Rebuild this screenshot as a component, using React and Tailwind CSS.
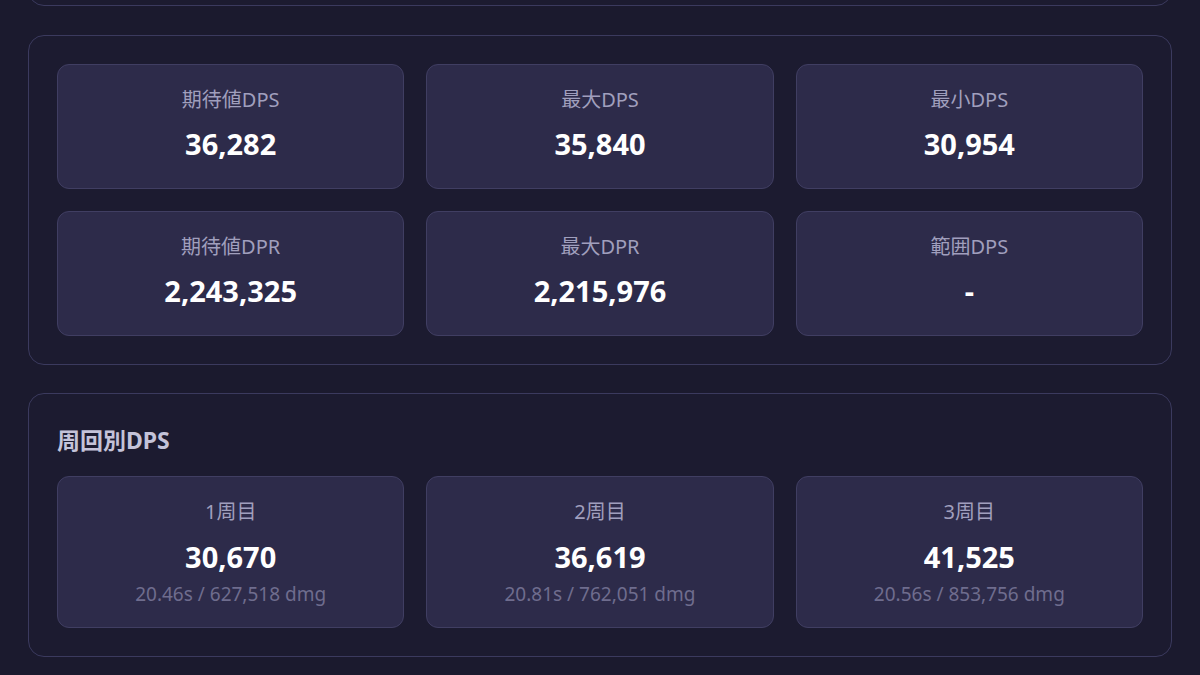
import React from "react";

const font = { fontFamily: '"Noto Sans", "Noto Sans CJK JP", sans-serif' };

function StatCard({ label, value }) {
  return (
    <div className="flex flex-col items-center rounded-xl border border-[#403e62] bg-[#2d2b4a] pt-[21px] pb-[23px]">
      <div className="text-[20px] leading-[28px] text-[#a09fbd]">{label}</div>
      <div className="mt-[9px] text-[29px] font-bold leading-[42px] text-white">{value}</div>
    </div>
  );
}

function RoundCard({ label, value, sub }) {
  return (
    <div className="flex flex-col items-center rounded-xl border border-[#403e62] bg-[#2d2b4a] pt-[21px] pb-[21px]">
      <div className="text-[20px] leading-[28px] text-[#a09fbd]">{label}</div>
      <div className="mt-[10px] text-[29px] font-bold leading-[42px] text-white">{value}</div>
      <div className="mt-[4px] text-[19px] leading-[24px] text-[#6f6d8e]">{sub}</div>
    </div>
  );
}

export default function App() {
  const stats = [
    ["期待値DPS", "36,282"],
    ["最大DPS", "35,840"],
    ["最小DPS", "30,954"],
    ["期待値DPR", "2,243,325"],
    ["最大DPR", "2,215,976"],
    ["範囲DPS", "-"],
  ];
  const rounds = [
    ["1周目", "30,670", "20.46s / 627,518 dmg"],
    ["2周目", "36,619", "20.81s / 762,051 dmg"],
    ["3周目", "41,525", "20.56s / 853,756 dmg"],
  ];
  return (
    <div style={font} className="h-[675px] overflow-hidden bg-[#1b1a2e] px-[28px]">
      <div className="-mt-[100px] h-[106px] rounded-2xl border border-[#3b3a5e] bg-[#1c1b30]" />
      <div className="mt-[29px] rounded-2xl border border-[#3b3a5e] bg-[#1c1b30] p-[28px]">
        <div className="grid grid-cols-3 gap-[22px]">
          {stats.map(([l, v]) => (
            <StatCard key={l} label={l} value={v} />
          ))}
        </div>
      </div>
      <div className="mt-[28px] rounded-2xl border border-[#3b3a5e] bg-[#1c1b30] p-[28px]">
        <div className="text-[23px] font-bold leading-[36px] text-[#c4c3d9]">周回別DPS</div>
        <div className="mt-[18px] grid grid-cols-3 gap-[22px]">
          {rounds.map(([l, v, s]) => (
            <RoundCard key={l} label={l} value={v} sub={s} />
          ))}
        </div>
      </div>
    </div>
  );
}
